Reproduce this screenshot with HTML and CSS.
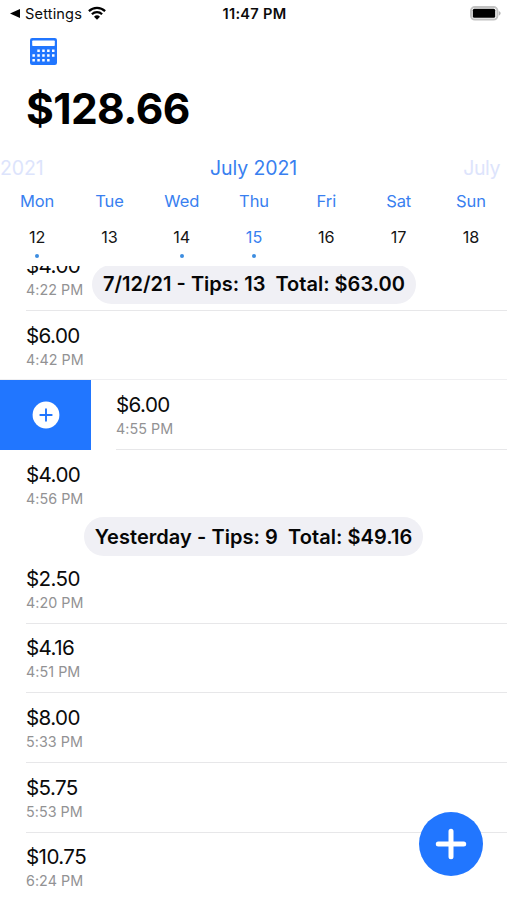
FILE: index.html
```html
<!DOCTYPE html>
<html lang="en">
<head>
<meta charset="utf-8">
<meta name="viewport" content="width=device-width, initial-scale=1">
<title>Tips</title>
<link rel="stylesheet" href="styles.css">
</head>
<body>
<div class="app">
  <header class="status">
    <div class="status-left">
      <svg class="back" viewBox="0 0 10 9"><path d="M0 4.5 10 0v9z" fill="#000"/></svg>
      <span class="status-back">Settings</span>
      <svg class="wifi" viewBox="0 0 18 14"><g fill="none" stroke="#000" stroke-width="2.2"><path d="M.9 5.1a11.7 11.7 0 0 1 16.2 0"/><path d="M3.9 8.2a7.3 7.3 0 0 1 10.2 0"/></g><path d="M9 13.8 6 10.7a4.3 4.3 0 0 1 6 0z" fill="#000"/></svg>
    </div>
    <span class="clock">11:47 PM</span>
    <svg class="battery" viewBox="0 0 31 15"><rect x="1" y="1" width="26.4" height="12.6" rx="3.8" fill="#fff" stroke="#c2c2c2" stroke-width="2"/><rect x="2.8" y="2.8" width="22.4" height="9" rx="1.5" fill="#000"/><path d="M28.8 5c2.4.9 2.4 3.7 0 4.6z" fill="#b5b5b5"/></svg>
  </header>
  <svg class="calculator" viewBox="0 0 27 27">
    <rect width="27" height="27" rx="2.2" fill="#2176ff"/>
    <rect x="2.2" y="2.5" width="22.6" height="5.6" rx=".8" fill="#fff"/>
    <g stroke="#fff" stroke-width="2.5" stroke-dasharray="2.5 2.4">
      <path d="M7.3 12.7h17.3"/><path d="M2.4 17.4h22.2"/><path d="M2.4 22.2h17.3"/>
    </g>
  </svg>
  <h1 class="total">$128.66</h1>
  <nav class="calendar">
    <div class="months"><span class="faded">2021</span><span class="month">July 2021</span><span class="faded next">July</span></div>
    <div class="week names"><span>Mon</span><span>Tue</span><span>Wed</span><span>Thu</span><span>Fri</span><span>Sat</span><span>Sun</span></div>
    <div class="week dates"><span class="dot">12</span><span>13</span><span class="dot">14</span><span class="dot today">15</span><span>16</span><span>17</span><span>18</span></div>
  </nav>
  <main class="list">
    <div class="pill pinned">7/12/21 - Tips: 13&nbsp; Total: $63.00</div>
    <section class="group first">
      <article class="row"><b>$4.00</b><time>4:22 PM</time></article>
      <article class="row wide"><b>$6.00</b><time>4:42 PM</time></article>
      <div class="swiped">
        <button class="action" aria-label="Add"><svg viewBox="0 0 28 28"><circle cx="14" cy="14" r="13.4" fill="#fff"/><path d="M14 8.3v11.4M8.3 14h11.4" stroke="#2176ff" stroke-width="1.9" stroke-linecap="round"/></svg></button>
        <article class="row"><b>$6.00</b><time>4:55 PM</time></article>
      </div>
      <article class="row"><b>$4.00</b><time>4:56 PM</time></article>
    </section>
    <div class="heading"><div class="pill yesterday">Yesterday - Tips: 9&nbsp; Total: $49.16</div></div>
    <section class="group">
      <article class="row"><b>$2.50</b><time>4:20 PM</time></article>
      <article class="row"><b>$4.16</b><time>4:51 PM</time></article>
      <article class="row"><b>$8.00</b><time>5:33 PM</time></article>
      <article class="row"><b>$5.75</b><time>5:53 PM</time></article>
      <article class="row"><b>$10.75</b><time>6:24 PM</time></article>
    </section>
  </main>
  <button class="fab" aria-label="Add tip"><svg viewBox="0 0 64 64"><path d="M32 19.3v25.4M19.3 32h25.4" stroke="#fff" stroke-width="5" stroke-linecap="round"/></svg></button>
</div>
</body>
</html>
```
FILE: styles.css
```css
* { box-sizing: border-box; }
body { margin: 0; background: #fff; color: #0b0b0b; font-family: Inter, "Liberation Sans", sans-serif; }
button { border: 0; padding: 0; }
svg { display: block; }
.app { position: relative; height: 900px; overflow: hidden; display: flex; flex-direction: column; }
.status { height: 38px; padding: 0 7px 11px 10px; display: grid; grid-template-columns: 1fr auto 1fr; align-items: center; font-size: 14.6px; flex: none; }
.status-left { display: flex; align-items: center; }
.back { width: 10px; height: 9px; margin-right: 5px; }
.status-back { letter-spacing: .15px; }
.wifi { width: 18px; height: 14px; margin: -1px 0 0 6px; }
.clock { font-weight: 600; letter-spacing: .3px; margin-left: -1px; }
.battery { width: 31px; height: 15px; justify-self: end; margin-right: -1px; }
.calculator { width: 27px; height: 27px; margin-left: 30px; flex: none; }
.total { margin: 17px 0 0 26px; height: 54px; line-height: 54px; font-size: 42.5px; font-weight: 700; letter-spacing: -.6px; color: #000; flex: none; }
.calendar { height: 130px; padding-top: 18px; flex: none; color: #397ff0; }
.months { display: grid; grid-template-columns: 1fr auto 1fr; height: 28px; line-height: 29px; font-size: 19.5px; letter-spacing: -.1px; }
.faded { color: #dde4fc; }
.next { text-align: right; padding-right: 7px; letter-spacing: -.4px; }
.week { display: grid; grid-template-columns: repeat(7, 72.3px); margin-left: 1px; text-align: center; }
.names { height: 38px; line-height: 38px; font-size: 16.5px; letter-spacing: -.1px; }
.dates { height: 46px; line-height: 34px; font-size: 16.2px; color: #151515; }
.dates .today { color: #397ff0; }
.dot::after { content: ""; display: block; width: 4.4px; height: 4.4px; margin: 0 auto; border-radius: 50%; background: #3d8de0; }
.list { position: relative; flex: 1; overflow: hidden; }
.group.first { margin-top: -24.9px; }
.row { height: 69.67px; margin-left: 26px; padding-top: 10.8px; border-bottom: 1px solid #e7e7e9; }
.row.wide { margin-left: 0; padding-left: 26px; border-bottom-color: #efeff1; }
.row:last-child { border-bottom-color: transparent; }
.swiped { display: flex; }
.swiped .row { flex: 1; margin-left: 25px; border-bottom-color: #e7e7e9; }
.row b { display: block; font-size: 20.6px; font-weight: 400; line-height: 27px; letter-spacing: -.6px; }
.row time { display: block; font-size: 14.3px; line-height: 21.5px; color: #929294; letter-spacing: .05px; }
.action { width: 91px; height: 69.67px; background: #2176ff; display: flex; align-items: center; justify-content: center; }
.action svg { width: 28px; height: 28px; margin-left: 1px; }
.pill { width: max-content; height: 39px; line-height: 38px; padding: 0 11px; border-radius: 20px; background: #f0f0f5; font-size: 20px; font-weight: 600; color: #060606; white-space: pre; }
.pinned { position: absolute; left: 92px; top: -1px; z-index: 1; }
.heading { height: 34.3px; display: flex; align-items: center; justify-content: center; }
.heading .pill { flex: none; }
.yesterday { line-height: 40px; letter-spacing: .05px; }
.fab { position: absolute; left: 418.5px; top: 812px; width: 64px; height: 64px; border-radius: 50%; background: #2176ff; }
.fab svg { width: 64px; height: 64px; }
```
